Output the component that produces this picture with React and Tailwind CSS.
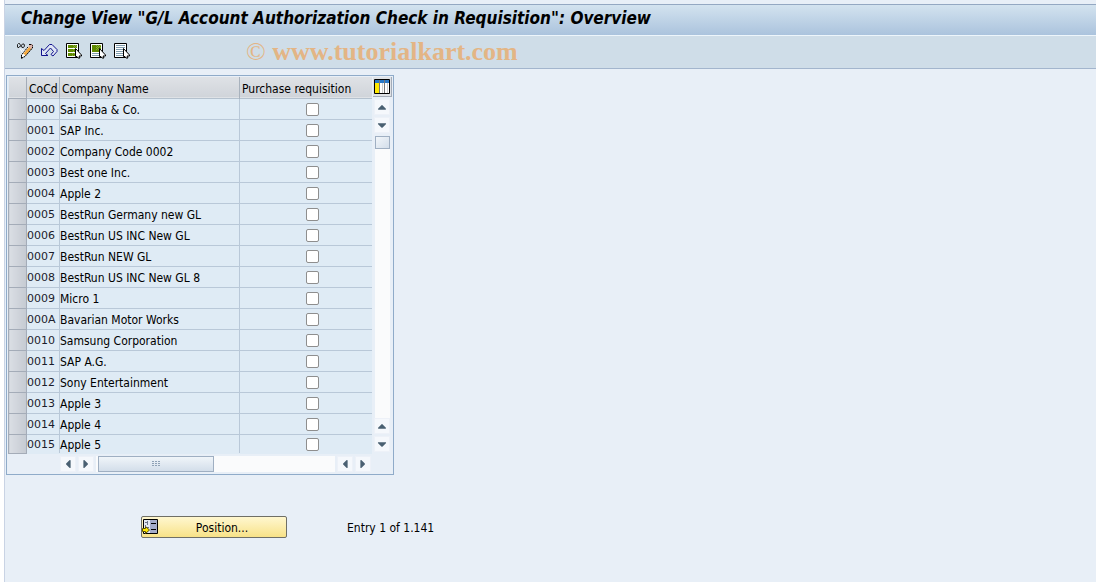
import React, { useState } from 'react';
import { FaCaretUp, FaCaretDown, FaCaretLeft, FaCaretRight } from 'react-icons/fa';

const companies = [
  { code: '0000', name: 'Sai Baba & Co.' },
  { code: '0001', name: 'SAP Inc.' },
  { code: '0002', name: 'Company Code 0002' },
  { code: '0003', name: 'Best one Inc.' },
  { code: '0004', name: 'Apple 2' },
  { code: '0005', name: 'BestRun Germany new GL' },
  { code: '0006', name: 'BestRun US INC New GL' },
  { code: '0007', name: 'BestRun NEW GL' },
  { code: '0008', name: 'BestRun US INC New GL 8' },
  { code: '0009', name: 'Micro 1' },
  { code: '000A', name: 'Bavarian Motor Works' },
  { code: '0010', name: 'Samsung Corporation' },
  { code: '0011', name: 'SAP A.G.' },
  { code: '0012', name: 'Sony Entertainment' },
  { code: '0013', name: 'Apple 3' },
  { code: '0014', name: 'Apple 4' },
  { code: '0015', name: 'Apple 5' },
];

const carets = { up: FaCaretUp, down: FaCaretDown, left: FaCaretLeft, right: FaCaretRight };

// Sheet outline and mouse pointer shared by the three selection icons
const Sheet = () => <path d="M.5.5h12v14H.5z" fill="#fff" stroke="#000" />;

const Cursor = () => (
  <path d="M9.500 5.500v8h1.500l1 1.500h2l-1-2h2.500v-1z" fill="#fff" stroke="#000" />
);

const EditIcon = () => (
  <svg width="16" height="16" viewBox="0 0 16 16">
    <path d="M4.500 14.500l1-4 7.500-8.500 2.500 0v2.500l-7.500 8.500z" fill="#f5a83c" />
    <path d="M6 10.500l6-7" stroke="#fff" />
    <path d="M11.500 3.500l2-2.500h1.500l1 1v1.500l-2 2.500z" fill="#dcb4ac" />
    <path d="M4.500 10.500h2l1.500 1.500-.500 2-3.500 1z" fill="#fff" />
    <path d="M12 1.500h2.500l1 1V5M15 5.500l-7 8-3.500 1.500v-3L11 4" fill="none" stroke="#000" strokeDasharray="2 .6" />
    <path d="M4 14h1.500v1.500H4z" fill="#000" />
    <path d="M.5 4V1.500l1-1h1l1 2L2 4.500H.5M3.500 3.500l2-2.500h1.500l.5 2-1 1.500H5l-.5-1.500" fill="none" stroke="#222" />
    <path d="M3 5.500l2.500 4M5 5.500l2 3" stroke="#fff" />
  </svg>
);

const UndoIcon = () => (
  <svg width="17" height="16" viewBox="0 0 17 16">
    <path
      d="M.5 5.500v7h6.500l-2.500-2 5-5.500 3 3.500-2.500 3 2 1.500 4-4.500v-2l-5-5H8.500l-5.500 6z"
      fill="#dfe6f4"
      stroke="#12128e"
    />
  </svg>
);

const SelectAllIcon = () => (
  <svg width="16" height="16" viewBox="0 0 16 16">
    <Sheet />
    <path d="M2 2h9v3H2zM2 6h9v3H2zM2 10h9v3H2z" fill="#5f8a00" />
    <path d="M7 2.500h4M8 3.500h3M7 4.500h4M7 6.500h2M7 8.500h2M6 10.500h3M6 12.500h3" stroke="#88ac38" strokeDasharray="1 1" />
    <Cursor />
  </svg>
);

const SelectBlockIcon = () => (
  <svg width="16" height="16" viewBox="0 0 16 16">
    <Sheet />
    <path d="M2 2h9v7H2z" fill="#5f8a00" />
    <path d="M6 2.500h5M7 3.500h4M6 4.500h5M7 5.500h4M6 6.500h3" stroke="#88ac38" strokeDasharray="1 1" />
    <path d="M2 10.500h7M2 12.500h7" stroke="#7f9cae" />
    <Cursor />
  </svg>
);

const DeselectIcon = () => (
  <svg width="16" height="16" viewBox="0 0 16 16">
    <Sheet />
    <path d="M2 2.500h9M2 4.500h9M2 6.500h7M2 8.500h7M2 10.500h7M2 12.500h7" stroke="#7f9cae" />
    <Cursor />
  </svg>
);

const ColumnsIcon = () => (
  <svg width="16" height="15" viewBox="0 0 16 15">
    <path d="M.5.5h15v14H.5z" fill="#fff" stroke="#000" />
    <path d="M1 1h14v3H1z" fill="#2878c8" />
    <path d="M1 4h4v10H1z" fill="#ffe800" />
    <path d="M5.500 1v13M10.500 1v13" stroke="#777" />
    <path d="M8.500 4v10M13.500 4v10" stroke="#ccc" />
  </svg>
);

const PositionIcon = () => (
  <svg width="16" height="16" viewBox="0 0 16 16">
    <path d="M1.500.5h14v14h-14z" fill="#a4acca" stroke="#000" />
    <path d="M2 1h6v13H2z" fill="#e4e8f2" />
    <path d="M9 4.500h5M9 10.500h5" stroke="#000" />
    <path d="M3 3.500h3M5.500 2v4M3 6.500h1M5 8.500h2" stroke="#6b7388" />
    <path d="M.5 9.500h3v-2l4 3.500-4 3.500v-2h-3z" fill="#ffe800" stroke="#5a5000" />
  </svg>
);

const toolbar = [
  { label: 'Change', Icon: EditIcon },
  { label: 'Undo', Icon: UndoIcon },
  { label: 'Select all', Icon: SelectAllIcon },
  { label: 'Select block', Icon: SelectBlockIcon },
  { label: 'Deselect all', Icon: DeselectIcon },
];

const ScrollButton = ({ dir, label }) => {
  const Caret = carets[dir];
  return (
    <button
      type="button"
      aria-label={label}
      className="flex size-4 shrink-0 items-center justify-center border border-[#edf1f8] bg-[#f5f8fc] text-[#4a6072]"
    >
      <Caret size={14} />
    </button>
  );
};

const App = () => {
  const [checked, setChecked] = useState({});

  const toggle = (code) => setChecked({ ...checked, [code]: !checked[code] });

  return (
    <div className="min-h-screen bg-white pl-1 font-['DejaVu_Sans_Condensed','DejaVu_Sans',sans-serif] text-[12px] text-black">
      <div className="min-h-screen border-l border-[#c9d3e4] bg-[#e8eff7] pt-1">
        {/* TITLE */}
        <header className="flex h-8 items-center border-y border-t-[#94a8c2] border-b-[#edf5fb] bg-linear-to-b from-[#d3e3ef] to-[#abc3dd] pl-4">
          <h1 className="pb-1 text-[17px] leading-6 font-bold whitespace-nowrap italic">
            Change View "G/L Account Authorization Check in Requisition": Overview
          </h1>
        </header>

        {/* TOOLBAR */}
        <div className="flex h-[33px] items-center border-b border-[#a3b5cd] bg-[#cfdde8] pl-3">
          <div className="flex gap-2 pb-[3px]">
            {toolbar.map(({ label, Icon }) => (
              <button key={label} type="button" aria-label={label}>
                <Icon />
              </button>
            ))}
          </div>
          <p className="ml-[116px] font-['Liberation_Serif',serif] text-[26px] leading-8 font-bold text-[#e3b585]">
            <span className="font-normal">©</span> www.tutorialkart.com
          </p>
        </div>

        {/* COMPANY TABLE */}
        <main className="pt-[6px] pl-px">
          <section className="w-fit border border-[#8fabc9] bg-[#e8eff7] pt-px pl-px">
            <div className="flex">
              <table className="table-fixed border-collapse bg-[#dfebf5]">
                <thead>
                  <tr className="h-[21px] border-b border-[#b4c1ce] bg-linear-to-b from-[#dfe2e6] to-[#d0d4da] text-left">
                    <th scope="col" aria-label="Select row" className="w-[18px] border-r border-b border-[#a4acb8]"></th>
                    <th scope="col" className="w-[33px] border-r border-[#a8b2bd] p-0 pt-1 pl-[2px] leading-4 font-normal">CoCd</th>
                    <th scope="col" className="w-[180px] border-r border-[#a8b2bd] p-0 pt-1 pl-[2px] leading-4 font-normal">Company Name</th>
                    <th scope="col" className="w-[132px] p-0 pt-1 pl-[2px] leading-4 font-normal">Purchase requisition</th>
                  </tr>
                </thead>
                <tbody>
                  {companies.map(({ code, name }) => (
                    <tr key={code} className="h-[21px] border-b border-[#b9c8d8] last:h-[19px] last:border-b-0">
                      <td className="border border-[#a4acb8] bg-linear-to-r from-[#dadee4] to-[#c5cad2] p-0"></td>
                      <td className="border-r border-[#b9c8d8] p-0 pt-[2px] font-['DejaVu_Sans',sans-serif] text-[11px] leading-4 text-[#1c1c2c]">{code}</td>
                      <td className="border-r border-[#b9c8d8] p-0 pt-[2px] leading-4 whitespace-nowrap">{name}</td>
                      <td className="p-0 pt-[2px]">
                        <input
                          type="checkbox"
                          aria-label={`Purchase requisition ${code}`}
                          checked={!!checked[code]}
                          onChange={() => toggle(code)}
                          className="ml-[66px] block size-[13px] appearance-none rounded-[2px] border border-[#8e8e8e] bg-white checked:bg-[#4a6072]"
                        />
                      </td>
                    </tr>
                  ))}
                </tbody>
              </table>

              {/* VERTICAL SCROLLBAR */}
              <div className="flex w-[21px] flex-col items-center pb-[2px]">
                <button
                  type="button"
                  aria-label="Table settings"
                  className="flex h-5 w-[19px] items-center justify-center border-r border-b border-[#a4acb8] bg-[#dfe2e6]"
                >
                  <ColumnsIcon />
                </button>
                <div className="mt-[2px] flex flex-col gap-[2px]">
                  <ScrollButton dir="up" label="Scroll up" />
                  <ScrollButton dir="down" label="Scroll down" />
                </div>
                <div className="mt-[3px] w-[15px] flex-1 bg-[#fafbfc]">
                  <div className="h-[13px] border border-[#9fafc2] bg-linear-to-br from-[#f2f6fa] to-[#d3deea]"></div>
                </div>
                <div className="flex flex-col gap-[2px]">
                  <ScrollButton dir="up" label="Previous row" />
                  <ScrollButton dir="down" label="Next row" />
                </div>
              </div>
            </div>

            {/* HORIZONTAL SCROLLBAR */}
            <div className="mr-[22px] ml-[52px] flex h-5 items-center gap-[2px]">
              <ScrollButton dir="left" label="Scroll left" />
              <ScrollButton dir="right" label="Scroll right" />
              <div className="h-4 flex-1 bg-[#fafbfc] pl-[2px]">
                <div className="flex h-4 w-[116px] items-center justify-center border border-[#9fafc2] bg-linear-to-b from-[#f0f5f9] to-[#d3deea]">
                  <svg width="8" height="5" viewBox="0 0 8 5">
                    <path d="M0 .5h2M3 .5h2M6 .5h2M0 2.500h2M3 2.500h2M6 2.500h2M0 4.500h2M3 4.500h2M6 4.500h2" stroke="#8fa2b6" />
                  </svg>
                </div>
              </div>
              <ScrollButton dir="left" label="Previous column" />
              <ScrollButton dir="right" label="Next column" />
            </div>
          </section>

          {/* FOOTER ACTIONS */}
          <div className="mt-[41px] ml-[135px] flex items-center gap-[60px]">
            <button
              type="button"
              className="flex h-[22px] w-[146px] items-center rounded-[2px] border border-[#6f6f66] bg-linear-to-b from-[#fff7cf] to-[#f8e287]"
            >
              <PositionIcon />
              <span className="flex-1 pt-[2px]">Position...</span>
            </button>
            <p className="pt-[2px]">Entry 1 of 1.141</p>
          </div>
        </main>
      </div>
    </div>
  );
};

export default App;
